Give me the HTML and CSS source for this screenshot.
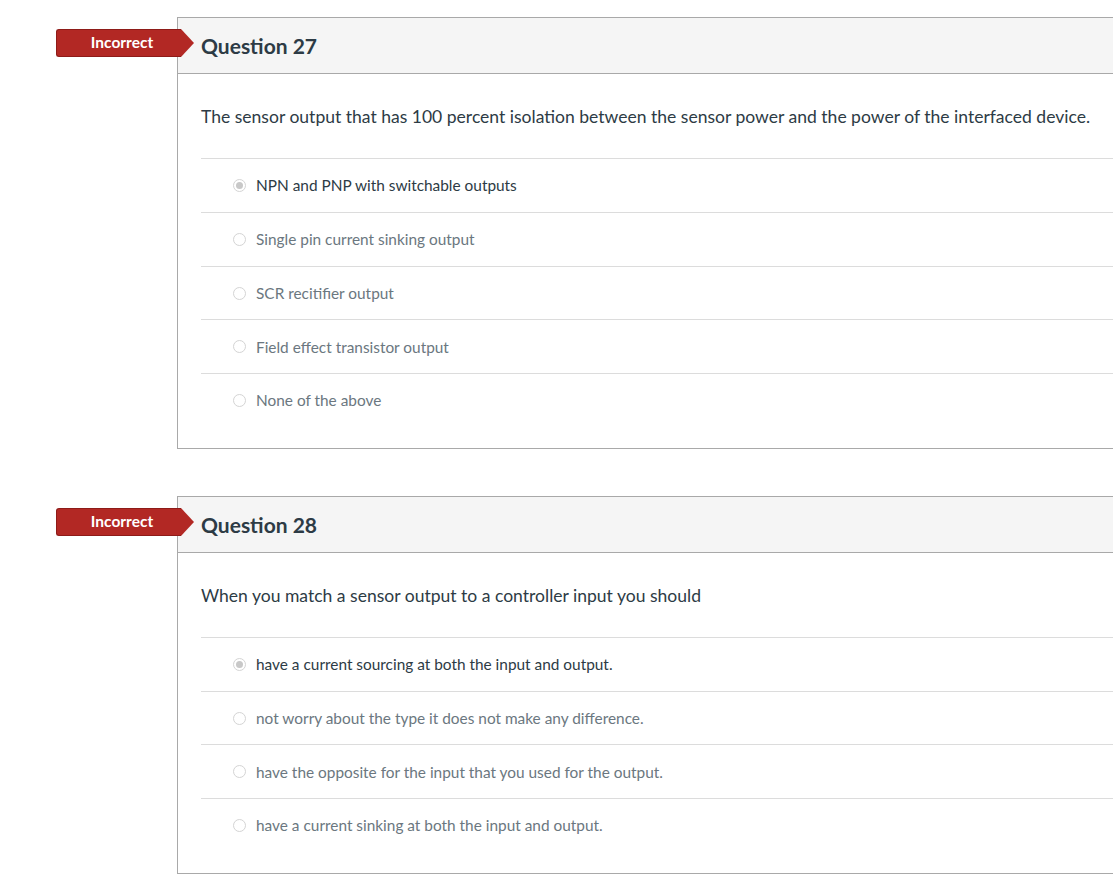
FILE: index.html
```html
<!DOCTYPE html>
<html lang="en">
<head>
  <meta charset="UTF-8" />
  <meta name="viewport" content="width=device-width, initial-scale=1.0"/>
  <title>Quiz Results</title>
  <link rel="stylesheet" href="styles.css">
</head>
<body>

<!-- Question 27 -->
<div class="question">
  <div class="badge">Incorrect</div>
  <div class="q-header"><h2>Question 27</h2></div>
  <div class="q-body">
    <p class="q-text">The sensor output that has 100 percent isolation between the sensor power and the power of the interfaced device.</p>
    <div class="answers">
      <div class="answer selected"><span class="radio"></span>NPN and PNP with switchable outputs</div>
      <div class="answer"><span class="radio"></span>Single pin current sinking output</div>
      <div class="answer"><span class="radio"></span>SCR recitifier output</div>
      <div class="answer"><span class="radio"></span>Field effect transistor output</div>
      <div class="answer"><span class="radio"></span>None of the above</div>
    </div>
  </div>
</div>

<!-- Question 28 -->
<div class="question">
  <div class="badge">Incorrect</div>
  <div class="q-header"><h2>Question 28</h2></div>
  <div class="q-body">
    <p class="q-text">When you match a sensor output to a controller input you should</p>
    <div class="answers">
      <div class="answer selected"><span class="radio"></span>have a current sourcing at both the input and output.</div>
      <div class="answer"><span class="radio"></span>not worry about the type it does not make any difference.</div>
      <div class="answer"><span class="radio"></span>have the opposite for the input that you used for the output.</div>
      <div class="answer"><span class="radio"></span>have a current sinking at both the input and output.</div>
    </div>
  </div>
</div>

</body>
</html>
```

FILE: styles.css
```css
body {
  font-family: Lato, "Open Sans", sans-serif;
  color: #2d3b45;
  background: #fff;
  margin: 0;
  padding-top: 17px;
  overflow: hidden;
}

.question {
  position: relative;
  margin-left: 177px;
  width: 980px;
  border: 1px solid #a9a9a9;
  margin-bottom: 47px;
}

.badge {
  position: absolute;
  left: -122px;
  top: 11px;
  width: 118px;
  height: 26px;
  line-height: 25px;
  background: #b22824;
  border: 1px solid #8e1b18;
  border-right: none;
  border-radius: 3px 0 0 3px;
  color: #fff;
  font-size: 15.5px;
  font-weight: bold;
  text-align: center;
  padding-left: 6px;
}
.badge::after {
  content: "";
  position: absolute;
  right: -13px;
  top: -1px;
  border-top: 14px solid transparent;
  border-bottom: 14px solid transparent;
  border-left: 13px solid #b22824;
}

.q-header {
  background: #f5f5f5;
  border-bottom: 1px solid #a9a9a9;
  height: 55px;
  padding-left: 23px;
  display: flex;
  align-items: center;
}
.q-header h2 {
  margin: 0;
  font-size: 21px;
  font-weight: bold;
}

.q-body {
  padding: 0 0 21px 23px;
}
.q-text {
  margin: 0;
  padding: 31px 0 29px;
  font-size: 17.55px;
  line-height: 24px;
  border-bottom: 1px solid #dcdcdc;
}

.answer {
  display: flex;
  align-items: center;
  height: 52.75px;
  padding-left: 55px;
  font-size: 15.4px;
  color: #6b7780;
  border-bottom: 1px solid #dcdcdc;
  position: relative;
}
.answer:last-child { border-bottom: none; }
.answer.selected { color: #2d3b45; }

.radio {
  position: absolute;
  left: 32px;
  top: 20px;
  width: 11px;
  height: 11px;
  border: 1px solid #d4d4d4;
  border-radius: 50%;
  background: #fff;
}
.selected .radio::after {
  content: "";
  position: absolute;
  left: 2px;
  top: 2px;
  width: 7px;
  height: 7px;
  border-radius: 50%;
  background: #c8c8c8;
}
```
